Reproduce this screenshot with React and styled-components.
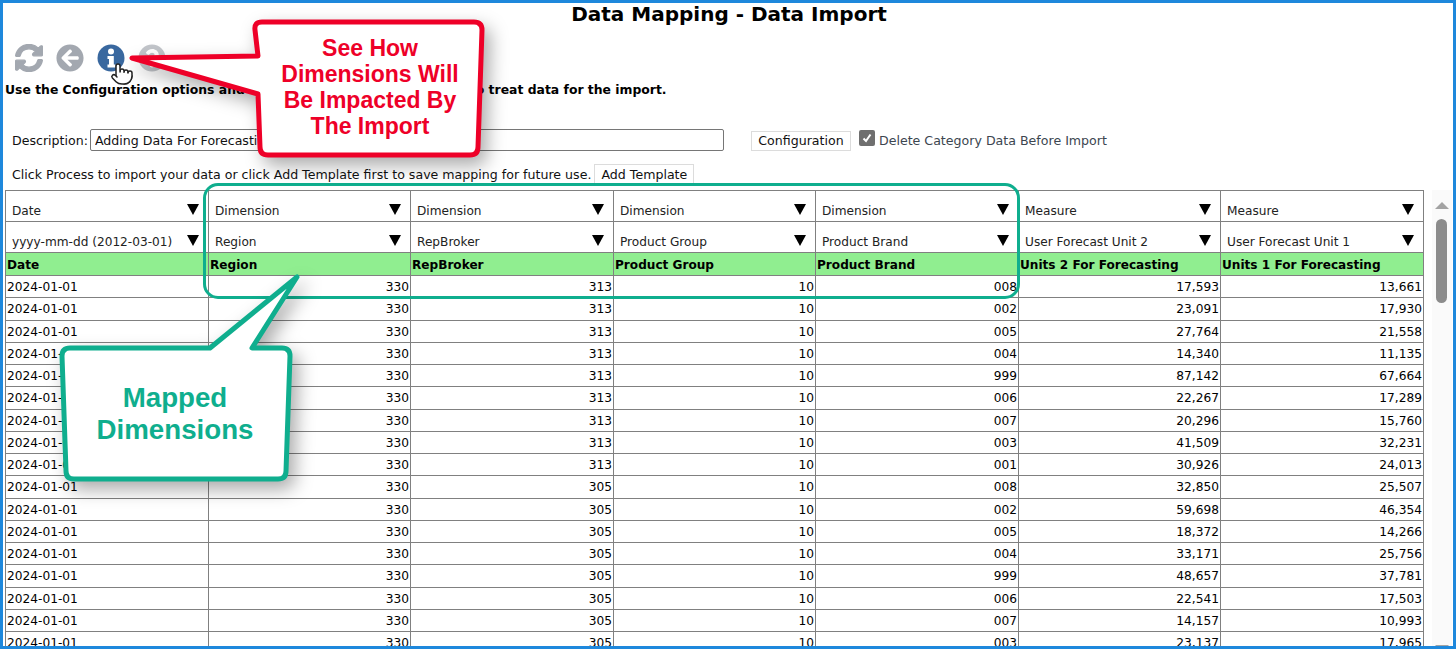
import styled, { createGlobalStyle } from "styled-components";
import { FaSyncAlt, FaArrowCircleLeft, FaQuestionCircle } from "react-icons/fa";
import { Pointer } from "lucide-react";

const COLUMNS = "203px 202px 203px 202px 203px 202px 203px";

const mappings = [
  { type: "Date", field: "yyyy-mm-dd (2012-03-01)", heading: "Date" },
  { type: "Dimension", field: "Region", heading: "Region" },
  { type: "Dimension", field: "RepBroker", heading: "RepBroker" },
  { type: "Dimension", field: "Product Group", heading: "Product Group" },
  { type: "Dimension", field: "Product Brand", heading: "Product Brand" },
  { type: "Measure", field: "User Forecast Unit 2", heading: "Units 2 For Forecasting" },
  { type: "Measure", field: "User Forecast Unit 1", heading: "Units 1 For Forecasting" },
];

const rows = [
  ["313", "008", "17,593", "13,661"],
  ["313", "002", "23,091", "17,930"],
  ["313", "005", "27,764", "21,558"],
  ["313", "004", "14,340", "11,135"],
  ["313", "999", "87,142", "67,664"],
  ["313", "006", "22,267", "17,289"],
  ["313", "007", "20,296", "15,760"],
  ["313", "003", "41,509", "32,231"],
  ["313", "001", "30,926", "24,013"],
  ["305", "008", "32,850", "25,507"],
  ["305", "002", "59,698", "46,354"],
  ["305", "005", "18,372", "14,266"],
  ["305", "004", "33,171", "25,756"],
  ["305", "999", "48,657", "37,781"],
  ["305", "006", "22,541", "17,503"],
  ["305", "007", "14,157", "10,993"],
  ["305", "003", "23,137", "17,965"],
];

const GlobalStyle = createGlobalStyle`
  html, body {
    margin: 0;
    padding: 0;
    background: #fff;
    overflow: hidden;
  }
  body {
    font-family: "DejaVu Sans", Verdana, sans-serif;
    font-size: 12.6px;
    color: #000;
  }
`;

const Frame = styled.div`
  position: relative;
  box-sizing: border-box;
  width: 1456px;
  height: 649px;
  padding: 0 0 0 2px;
  border: 3px solid #1e88dc;
  overflow: hidden;
`;

const Title = styled.h1`
  margin: 0;
  height: 23px;
  line-height: 23px;
  font-size: 20px;
  font-weight: bold;
  text-align: center;
`;

const Toolbar = styled.div`
  display: flex;
  align-items: flex-start;
  gap: 13px;
  box-sizing: border-box;
  height: 55px;
  padding: 18px 0 0 10px;
`;

const ToolIcon = styled.span`
  display: flex;
  font-size: 28px;
  color: ${(p) => p.$color || "#a3a8b0"};
  svg path {
    stroke: ${(p) => (p.$heavy ? "currentColor" : "none")};
    stroke-width: 24px;
  }
`;

const Intro = styled.p`
  margin: 0;
  height: 18px;
  line-height: 18px;
  font-size: 12.4px;
  font-weight: bold;
`;

const DescriptionRow = styled.div`
  display: flex;
  align-items: center;
  height: 22px;
  margin-top: 30px;
  padding-left: 7px;
  color: #111;
`;

const Description = styled.label`
  margin-right: 2px;
`;

const TextInput = styled.input`
  box-sizing: border-box;
  width: 634px;
  height: 22px;
  padding: 0 4px;
  border: 1px solid #767676;
  border-radius: 2px;
  font: inherit;
  color: #111;
`;

const Button = styled.button`
  box-sizing: border-box;
  height: 20px;
  width: 100px;
  padding: 0;
  background: #fff;
  border: 1px solid #dcdcdc;
  font: inherit;
  color: #111;
`;

const ConfigButton = styled(Button)`
  margin-left: 27px;
  margin-top: 1px;
`;

const CheckBox = styled.span`
  display: flex;
  align-items: center;
  justify-content: center;
  box-sizing: border-box;
  width: 16px;
  height: 16px;
  margin: -5px 4px 0 8px;
  border-radius: 2px;
  background: #6f6f6f;
`;

const CheckLabel = styled.span`
  color: #3c4650;
`;

const TemplateRow = styled.div`
  display: flex;
  align-items: center;
  height: 20px;
  margin-top: 13px;
  padding-left: 7px;
  color: #111;
  ${Button} {
    margin-left: 3px;
  }
`;

const TableArea = styled.div`
  display: flex;
  margin-top: 6px;
  height: 460px;
`;

const Table = styled.div`
  flex: none;
  width: 1419px;
  border-top: 1px solid #808080;
  border-left: 1px solid #808080;
  box-sizing: border-box;
  height: 470px;
`;

const Row = styled.div`
  display: grid;
  grid-template-columns: ${COLUMNS};
  height: ${(p) => p.$height}px;
  box-sizing: border-box;
  border-bottom: 1px solid #808080;
`;

const Cell = styled.div`
  box-sizing: border-box;
  border-right: 1px solid #808080;
  padding: 0 ${(p) => (p.$right ? "1px" : "0")} 0 1px;
  line-height: 23px;
  font-size: 12.2px;
  text-align: ${(p) => (p.$right ? "right" : "left")};
  white-space: nowrap;
  overflow: hidden;
`;

const HeadCell = styled(Cell)`
  background: #90ee90;
  font-weight: bold;
  font-size: 12.1px;
  line-height: 24px;
`;

const PickCell = styled(Cell)`
  display: flex;
  align-items: flex-end;
  justify-content: space-between;
  padding: 0 9px 1px 6px;
  line-height: 18px;
  font-size: 12.15px;
  color: #222;
`;

const Arrow = styled.span`
  flex: none;
  width: 0;
  height: 0;
  margin-bottom: 5px;
  border-left: 6px solid transparent;
  border-right: 6px solid transparent;
  border-top: 11px solid #000;
`;

const ScrollBar = styled.div`
  position: relative;
  flex: none;
  width: 20px;
  margin-left: 8px;
  background: #fafafa;
`;

const ScrollUp = styled.span`
  position: absolute;
  top: 12px;
  left: 3px;
  width: 0;
  height: 0;
  border-left: 7px solid transparent;
  border-right: 7px solid transparent;
  border-bottom: 7px solid #a3a3a3;
`;

const ScrollDown = styled.span`
  position: absolute;
  top: 455px;
  left: 3px;
  width: 0;
  height: 0;
  border-left: 7px solid transparent;
  border-right: 7px solid transparent;
  border-top: 7px solid #a3a3a3;
`;

const ScrollThumb = styled.span`
  position: absolute;
  top: 29px;
  left: 4px;
  width: 11px;
  height: 84px;
  border-radius: 6px;
  background: #8c8c8c;
`;

const MappedBox = styled.div`
  position: absolute;
  left: 200px;
  top: 180px;
  width: 817px;
  height: 116px;
  box-sizing: border-box;
  border: 3px solid #0fae8e;
  border-radius: 15px;
`;

const Callout = styled.div`
  position: absolute;
  left: ${(p) => p.$left}px;
  top: ${(p) => p.$top}px;
  width: ${(p) => p.$width}px;
  height: ${(p) => p.$height}px;
  svg {
    display: block;
    overflow: visible;
    filter: drop-shadow(6px 8px 9px rgba(0, 0, 0, 0.33));
  }
`;

const CalloutText = styled.div`
  position: absolute;
  left: ${(p) => p.$left}px;
  top: ${(p) => p.$top}px;
  width: ${(p) => p.$width}px;
  font-family: "Liberation Sans", Arial, sans-serif;
  font-weight: bold;
  font-size: ${(p) => p.$size}px;
  line-height: ${(p) => p.$line}px;
  text-align: center;
  color: ${(p) => p.$color};
`;

const HandCursor = styled.span`
  position: absolute;
  left: 107px;
  top: 59px;
  display: flex;
  svg {
    fill: #fff;
    stroke: #222;
  }
`;

const InfoIcon = () => (
  <svg width="28" height="28" viewBox="0 0 28 28">
    <circle cx="14" cy="14" r="13.5" fill="#39689f" />
    <circle cx="14" cy="7.5" r="3" fill="#fff" />
    <path d="M10.5 12 H16.8 V20.5 H18.5 V23.5 H10.5 V20.5 H12 V15 H10.5 Z" fill="#fff" />
  </svg>
);

const App = () => {
  return (
    <>
      <GlobalStyle />
      <Frame>
        <Title>Data Mapping - Data Import</Title>
        <Toolbar>
          <ToolIcon $heavy><FaSyncAlt /></ToolIcon>
          <ToolIcon><FaArrowCircleLeft /></ToolIcon>
          <ToolIcon><InfoIcon /></ToolIcon>
          <ToolIcon $color="#c2c5ca"><FaQuestionCircle /></ToolIcon>
        </Toolbar>
        <Intro>Use the Configuration options and mappings below to decide how to treat data for the import.</Intro>
        <DescriptionRow>
          <Description>Description:</Description>
          <TextInput readOnly value="Adding Data For Forecasting" />
          <ConfigButton>Configuration</ConfigButton>
          <CheckBox>
            <svg width="12" height="12" viewBox="0 0 12 12">
              <path d="M2.5 6.5 L5 9 L9.5 2.5" fill="none" stroke="#fff" strokeWidth="2" />
            </svg>
          </CheckBox>
          <CheckLabel>Delete Category Data Before Import</CheckLabel>
        </DescriptionRow>
        <TemplateRow>
          Click Process to import your data or click Add Template first to save mapping for future use.
          <Button>Add Template</Button>
        </TemplateRow>
        <TableArea>
          <Table>
            <Row $height={31}>
              {mappings.map((m, i) => (
                <PickCell key={i}>{m.type}<Arrow /></PickCell>
              ))}
            </Row>
            <Row $height={31}>
              {mappings.map((m, i) => (
                <PickCell key={i}>{m.field}<Arrow /></PickCell>
              ))}
            </Row>
            <Row $height={23}>
              {mappings.map((m, i) => (
                <HeadCell key={i}>{m.heading}</HeadCell>
              ))}
            </Row>
            {rows.map((r, i) => (
              <Row key={i} $height={22.25}>
                <Cell>2024-01-01</Cell>
                <Cell $right>330</Cell>
                <Cell $right>{r[0]}</Cell>
                <Cell $right>10</Cell>
                <Cell $right>{r[1]}</Cell>
                <Cell $right>{r[2]}</Cell>
                <Cell $right>{r[3]}</Cell>
              </Row>
            ))}
          </Table>
          <ScrollBar>
            <ScrollUp />
            <ScrollThumb />
            <ScrollDown />
          </ScrollBar>
        </TableArea>

        <MappedBox />

        <Callout $left={124} $top={14} $width={360} $height={140}>
          <svg width="360" height="140" viewBox="0 0 360 140">
            <path
              d="M5 41 L131 39 L128 13 Q127 5 135 5 L347 5 Q355 5 355 13 L351 130 Q351 138 343 138 L141 138 Q133 138 133 130 L131 77 Z"
              fill="#fff"
              stroke="#ee0028"
              strokeWidth="5"
              strokeLinejoin="round"
            />
          </svg>
          <CalloutText $left={140} $top={18} $width={206} $size={23} $line={26} $color="#ee0028">
            See How<br />Dimensions Will<br />Be Impacted By<br />The Import
          </CalloutText>
        </Callout>

        <HandCursor>
          <Pointer size={24} strokeWidth={1.5} />
        </HandCursor>

        <Callout $left={57} $top={271} $width={240} $height={210}>
          <svg width="240" height="210" viewBox="0 0 240 210">
            <path
              d="M237 3 L192 74 L222 74 Q230 74 230 82 L226 197 Q226 205 218 205 L14 205 Q6 205 6 197 L2 82 Q2 74 10 74 L150 74 Z"
              fill="#fff"
              stroke="#0fae8e"
              strokeWidth="5"
              strokeLinejoin="round"
            />
          </svg>
          <CalloutText $left={4} $top={108} $width={222} $size={27.7} $line={32} $color="#0fae8e">
            Mapped<br />Dimensions
          </CalloutText>
        </Callout>
      </Frame>
    </>
  );
};

export default App;
